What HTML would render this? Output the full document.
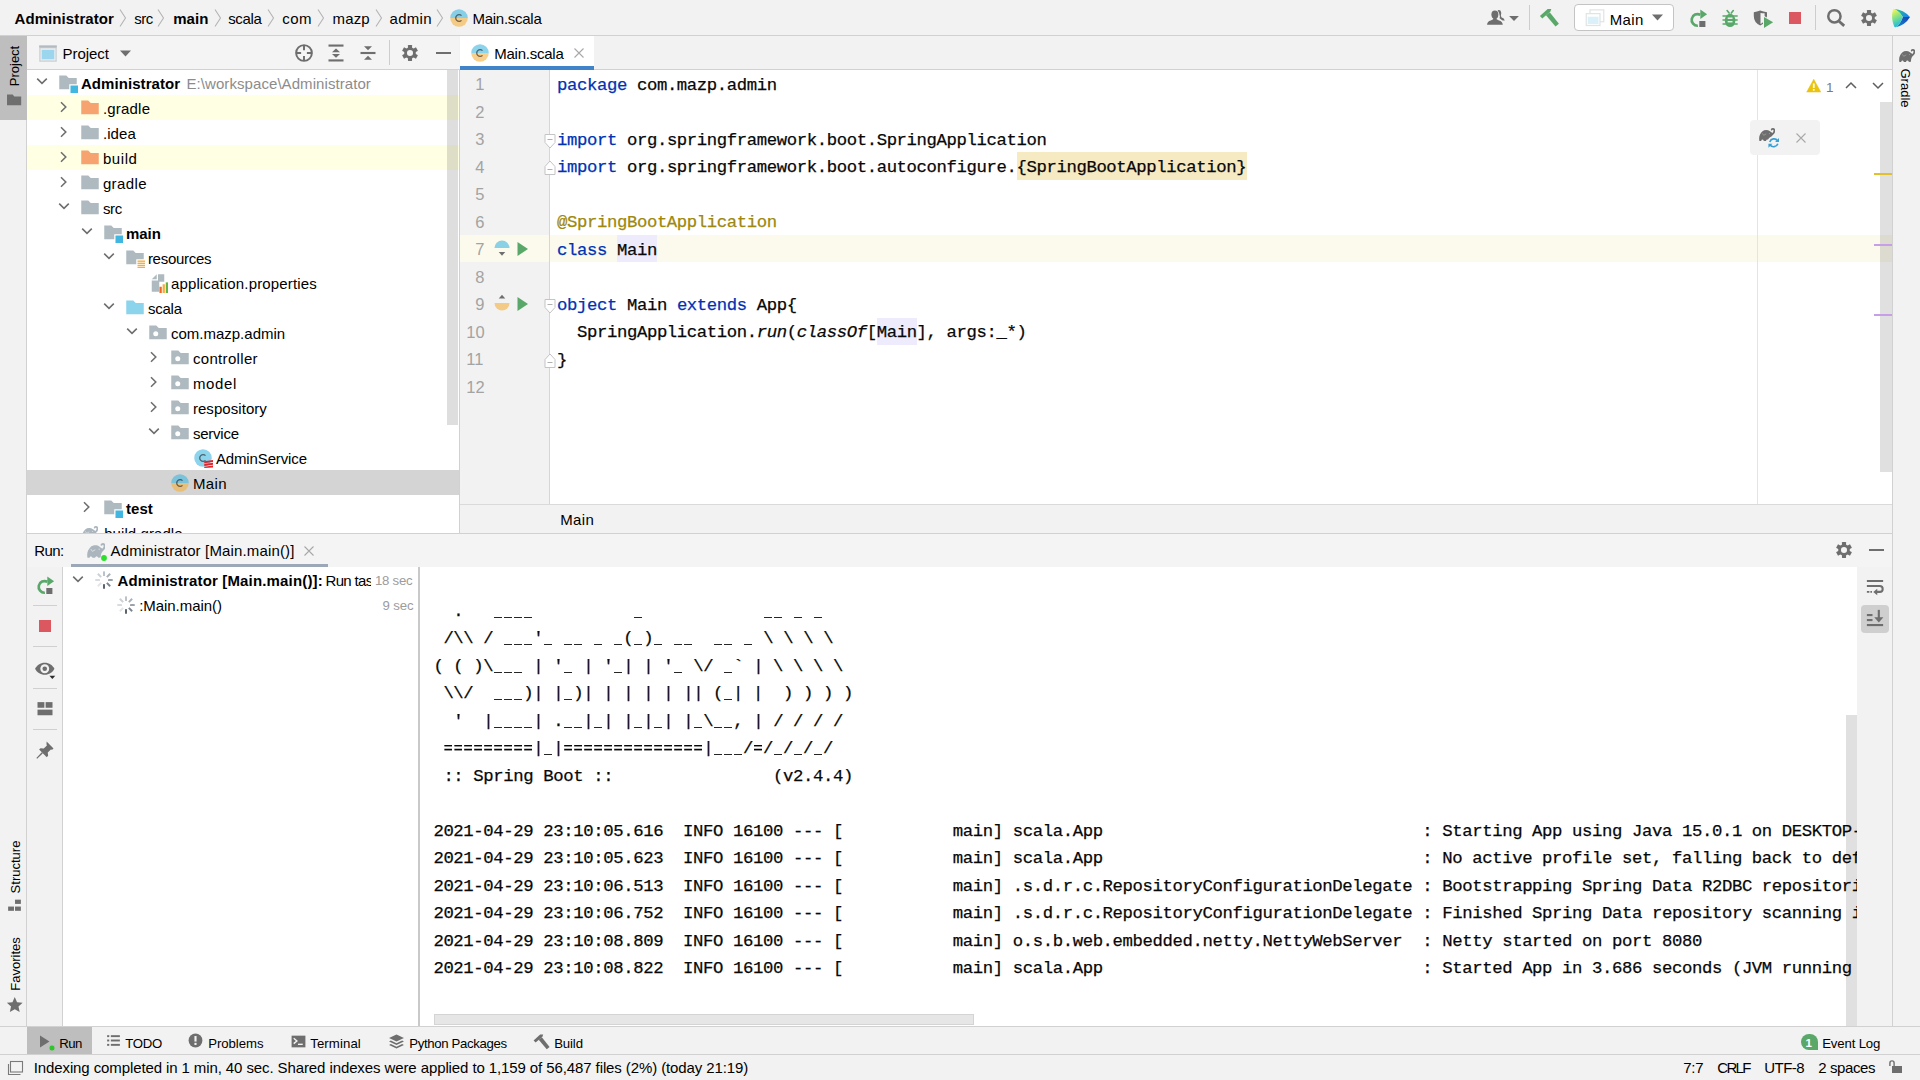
<!DOCTYPE html>
<html lang="en"><head><meta charset="utf-8"><title>Administrator - Main.scala</title>
<style>
html,body{margin:0;padding:0}
body{width:1920px;height:1080px;position:relative;overflow:hidden;background:#f2f2f2;
font-family:"Liberation Sans",sans-serif;font-size:15px;color:#000}
div,svg,span.t,pre{position:absolute}
span.t{white-space:pre;display:block}
pre{margin:0;font-family:"Liberation Mono",monospace;white-space:pre}
.kw{color:#0033b3}.an{color:#9e880d}.it{font-style:italic}
.us{-webkit-mask-image:repeating-linear-gradient(90deg,transparent 0,transparent 1.2px,#000 1.2px,#000 8.8px,transparent 8.8px,transparent 10px);mask-image:repeating-linear-gradient(90deg,transparent 0,transparent 1.2px,#000 1.2px,#000 8.8px,transparent 8.8px,transparent 10px)}
</style></head>
<body>
<div style="left:0px;top:0px;width:1920px;height:35px;background:#f2f2f2;"></div>
<div style="left:0px;top:35px;width:1920px;height:1px;background:#d1d1d1;"></div>
<span class="t" style="left:14.50px;top:8.80px;font-size:15px;line-height:20px;color:#000;font-weight:700;letter-spacing:0.089px;">Administrator</span>
<span class="t" style="left:134.20px;top:8.80px;font-size:15px;line-height:20px;color:#000;letter-spacing:-0.500px;">src</span>
<span class="t" style="left:173.20px;top:8.80px;font-size:15px;line-height:20px;color:#000;font-weight:700;letter-spacing:0.071px;">main</span>
<span class="t" style="left:228.20px;top:8.80px;font-size:15px;line-height:20px;color:#000;letter-spacing:-0.346px;">scala</span>
<span class="t" style="left:282.20px;top:8.80px;font-size:15px;line-height:20px;color:#000;letter-spacing:0.452px;">com</span>
<span class="t" style="left:332.50px;top:8.80px;font-size:15px;line-height:20px;color:#000;letter-spacing:0.178px;">mazp</span>
<span class="t" style="left:389.50px;top:8.80px;font-size:15px;line-height:20px;color:#000;letter-spacing:0.308px;">admin</span>
<span class="t" style="left:472.50px;top:8.80px;font-size:15px;line-height:20px;color:#000;letter-spacing:-0.270px;">Main.scala</span>
<svg style="left:118.1px;top:8px;" width="10" height="20" viewBox="0 0 10 20"><path d="M2 1.500L7.500 10 2 18.500" fill="none" stroke="#b4b4b4" stroke-width="1.1"/></svg>
<svg style="left:156.3px;top:8px;" width="10" height="20" viewBox="0 0 10 20"><path d="M2 1.500L7.500 10 2 18.500" fill="none" stroke="#b4b4b4" stroke-width="1.1"/></svg>
<svg style="left:212.8px;top:8px;" width="10" height="20" viewBox="0 0 10 20"><path d="M2 1.500L7.500 10 2 18.500" fill="none" stroke="#b4b4b4" stroke-width="1.1"/></svg>
<svg style="left:265.8px;top:8px;" width="10" height="20" viewBox="0 0 10 20"><path d="M2 1.500L7.500 10 2 18.500" fill="none" stroke="#b4b4b4" stroke-width="1.1"/></svg>
<svg style="left:315.8px;top:8px;" width="10" height="20" viewBox="0 0 10 20"><path d="M2 1.500L7.500 10 2 18.500" fill="none" stroke="#b4b4b4" stroke-width="1.1"/></svg>
<svg style="left:373.8px;top:8px;" width="10" height="20" viewBox="0 0 10 20"><path d="M2 1.500L7.500 10 2 18.500" fill="none" stroke="#b4b4b4" stroke-width="1.1"/></svg>
<svg style="left:434.8px;top:8px;" width="10" height="20" viewBox="0 0 10 20"><path d="M2 1.500L7.500 10 2 18.500" fill="none" stroke="#b4b4b4" stroke-width="1.1"/></svg>
<svg style="left:448.75px;top:8px;" width="20" height="20" viewBox="0 0 16 16"><path d="M1 8a7 7 0 0 1 14 0z" fill="#40b6e0" fill-opacity=".6"/><path d="M1 8a7 7 0 0 0 14 0z" fill="#f4af3d" fill-opacity=".6"/><path d="M10 9.9a2.7 2.7 0 1 1 0-3.8" fill="none" stroke="#231f20" stroke-opacity=".62" stroke-width="1.05"/></svg>
<svg style="left:1485px;top:8px;" width="22" height="20" viewBox="0 0 22 20"><g fill="#6e6e6e"><path d="M12.600 2.300Q14.300 1.300 15.600 2.800Q16.700 4.500 15.900 7.600L16.400 9.200Q19.300 10.300 19.800 12.400Q18.300 12.900 16.800 11.900L14.600 10.300L14.900 8.400Q14.600 5.200 12.600 2.300z"/><ellipse cx="9.900" cy="6.600" rx="3.500" ry="4.200"/><path d="M2 16.800Q2.300 13.300 5.800 12.500L8.200 11.300L8.200 9.500L11.600 9.500L11.600 11.300L14 12.500Q17.400 13.300 17.800 16.800z"/></g></svg>
<svg style="left:1508px;top:15px;" width="12" height="7" viewBox="0 0 12 7"><path d="M1.100 .9h9.800L6 6z" fill="#6e6e6e"/></svg>
<div style="left:1529px;top:5px;width:1px;height:25px;background:#cdcdcd;"></div>
<svg style="left:1538px;top:6px;" width="24" height="24" viewBox="0 0 24 24"><g fill="#59a869"><path d="M1.900 10L9.700 3.100L13.300 3.100L12.400 5.500L4.300 12.600z"/><path d="M8 9.200L11.700 6.200L20.900 17.700L17.500 20.400z"/></g></svg>
<div style="left:1574px;top:4px;width:100px;height:27px;background:#fff;box-sizing:border-box;border:1px solid #c4c4c4;border-radius:4px;"></div>
<svg style="left:1585px;top:8px;" width="20" height="20" viewBox="0 0 16 16"><g opacity=".3"><rect x="4" y="1.500" width="11" height="9.500" fill="#fff" stroke="#9aa7b0" stroke-width="1"/><rect x="1" y="4.500" width="11" height="9.500" fill="#fff" stroke="#9aa7b0" stroke-width="1"/><rect x="2.200" y="7" width="8.600" height="5.800" fill="#40b6e0" fill-opacity=".6"/></g></svg>
<span class="t" style="left:1609.70px;top:9.90px;font-size:15px;line-height:20px;color:#000;letter-spacing:0.371px;">Main</span>
<svg style="left:1651px;top:13px;" width="13" height="9" viewBox="0 0 13 9"><path d="M1 1.500h11L6.500 7.500z" fill="#6e6e6e"/></svg>
<svg style="left:1688px;top:6px;" width="22" height="24" viewBox="0 0 22 24"><path d="M12.300 8.760A5.850 5.850 0 1 0 9.900 19.750" fill="none" stroke="#59a869" stroke-width="2.700"/><path d="M12.300 3.400L19.100 8.200L12.300 12.900z" fill="#59a869"/><rect x="11.300" y="15" width="6.100" height="6" fill="#6e6e6e"/></svg>
<svg style="left:1720px;top:6px;" width="20" height="24" viewBox="0 0 20 24"><g fill="#59a869"><ellipse cx="10.100" cy="14.400" rx="5.300" ry="6.700"/><rect x="2.300" y="9.150" width="15.600" height="1.500" rx=".7"/><rect x="2.300" y="13.150" width="15.600" height="1.500" rx=".7"/><rect x="2.300" y="17.250" width="15.600" height="1.500" rx=".7"/></g><path d="M7.100 4.600L9.100 7.100M13.300 4.600L11.300 7.100" stroke="#59a869" stroke-width="1.600" stroke-linecap="round" fill="none"/><rect x="7.700" y="11.500" width="4.800" height="1.400" fill="#f2f2f2"/><rect x="7.700" y="15" width="4.800" height="1.400" fill="#f2f2f2"/></svg>
<svg style="left:1752px;top:6px;" width="24" height="24" viewBox="0 0 24 24"><path d="M1.800 6.200Q5 5.600 8.200 4.400Q11.400 5.600 15 6.200L15 10Q14.500 16.500 8.200 19.500Q1.800 16.500 1.800 10z" fill="#6e6e6e"/><path d="M8.500 6.900Q10.500 7.400 12.600 7.300L12.600 11L11 12L11 16.300Q10 17.300 8.500 17.900z" fill="#f2f2f2"/><path d="M11 9.300L22.700 16.300L11 23.700z" fill="#f2f2f2"/><path d="M12 10.900L21.100 16.300L12 22.100z" fill="#59a869"/></svg>
<div style="left:1789px;top:12px;width:12px;height:12px;background:#db5860;"></div>
<div style="left:1815px;top:5px;width:1px;height:25px;background:#cdcdcd;"></div>
<svg style="left:1824px;top:6px;" width="24" height="24" viewBox="0 0 24 24"><circle cx="10.400" cy="10.300" r="6.150" fill="none" stroke="#6e6e6e" stroke-width="2.500"/><path d="M15 15.300L20.200 19.900" stroke="#6e6e6e" stroke-width="2.800" fill="none"/></svg>
<svg style="left:1859px;top:8px;" width="20" height="20" viewBox="0 0 20 20"><g transform="translate(10 10)" fill="#6e6e6e"><rect x="-2.050" y="-8" width="4.100" height="4" rx=".4" transform="rotate(0)"/><rect x="-2.050" y="-8" width="4.100" height="4" rx=".4" transform="rotate(60)"/><rect x="-2.050" y="-8" width="4.100" height="4" rx=".4" transform="rotate(120)"/><rect x="-2.050" y="-8" width="4.100" height="4" rx=".4" transform="rotate(180)"/><rect x="-2.050" y="-8" width="4.100" height="4" rx=".4" transform="rotate(240)"/><rect x="-2.050" y="-8" width="4.100" height="4" rx=".4" transform="rotate(300)"/><circle r="5.800"/><circle r="3.050" fill="#f2f2f2"/></g></svg>
<svg style="left:1890px;top:6px;" width="22" height="24" viewBox="0 0 22 24"><defs><linearGradient id="lg1" x1=".2" y1="0" x2=".5" y2="1"><stop offset="0" stop-color="#fcf84a"/><stop offset=".5" stop-color="#7bdf8e"/><stop offset="1" stop-color="#10b9e6"/></linearGradient><linearGradient id="lg2" x1="0" y1="0" x2="1" y2=".6"><stop offset="0" stop-color="#21d07a"/><stop offset="1" stop-color="#1e86e8"/></linearGradient><linearGradient id="lg3" x1="1" y1="0" x2="0" y2="1"><stop offset="0" stop-color="#1a3caa"/><stop offset="1" stop-color="#1591e0"/></linearGradient></defs><path d="M4.200 2.900Q13.500 3.500 20 10.900L12.800 10.900Q9.800 5.500 4.200 2.900z" fill="url(#lg2)"/><path d="M20 10.900Q15.500 18.800 5.700 21.200Q11 17 12.800 10.900z" fill="url(#lg3)"/><path d="M4.200 2.900Q9.800 5.500 12.800 10.900Q11 17 5.700 21.200Q4.500 21.500 4 20Q.8 12 2.800 4Q3.200 2.600 4.200 2.900z" fill="url(#lg1)"/></svg>
<div style="left:0px;top:36px;width:26px;height:990px;background:#f2f2f2;"></div>
<div style="left:26px;top:36px;width:1px;height:990px;background:#d1d1d1;"></div>
<div style="left:0px;top:36px;width:27px;height:84px;background:#bebebe;"></div>
<span class="t" style="left:-13px;top:56px;width:56px;height:20px;line-height:20px;font-size:13px;text-align:center;transform:rotate(-90deg);letter-spacing:0px">Project</span>
<svg style="left:5.7px;top:91.9px;" width="16.2" height="16.2" viewBox="0 0 16 16"><path d="M1 2.500h5.600l1.600 2H15v8.500H1z" fill="#6e6e6e"/></svg>
<span class="t" style="left:-19px;top:857px;width:70px;height:20px;line-height:20px;font-size:13px;text-align:center;transform:rotate(-90deg);letter-spacing:0px">Structure</span>
<svg style="left:6px;top:897px;" width="17" height="17" viewBox="0 0 16 16"><g fill="#6e6e6e"><rect x="8.500" y="2.500" width="5.500" height="4"/><rect x="2" y="9" width="5.500" height="4"/><rect x="8.500" y="9" width="5.500" height="4"/></g></svg>
<span class="t" style="left:-19px;top:954px;width:70px;height:20px;line-height:20px;font-size:13px;text-align:center;transform:rotate(-90deg);letter-spacing:0px">Favorites</span>
<svg style="left:5.5px;top:995.5px;" width="17.5" height="17.5" viewBox="0 0 16 16"><path d="M8 1l2.100 4.700 5.100.5-3.800 3.400 1.100 5L8 12l-4.500 2.600 1.100-5L.8 6.200l5.100-.5z" fill="#6e6e6e"/></svg>
<div style="left:1892px;top:36px;width:1px;height:990px;background:#d1d1d1;"></div>
<div style="left:1893px;top:36px;width:27px;height:990px;background:#f2f2f2;"></div>
<svg style="left:1898.8px;top:48.7px;" width="16.4" height="13.2" viewBox="0 0 16.4 13.2"><path d="M0.4 12.9C-0.4 9.2 0.7 5.6 3.2 3.4C5.5 1.7 8.7 1.6 11 3.300C12 4.100 12.800 4.700 13.600 4.900L14.300 6.600C12.800 7.900 12.100 9.500 11.900 12.700L10 12.900Q8.300 10.200 6.900 12.900L4.900 12.900Q3.300 10.200 2.100 12.900z" fill="#6e6e6e"/><path d="M12.600 6.600Q15.300 5.300 15.400 2.900Q15.400 0.900 13.900 0.900Q12.900 0.900 12.700 1.600" fill="none" stroke="#6e6e6e" stroke-width="1.700" stroke-linecap="round"/><path d="M3.300 5.300L4.700 7.300L7.200 5.900" fill="none" stroke="#a6a6a6" stroke-width=".7"/><circle cx="10.600" cy="5.400" r=".5" fill="#a6a6a6"/></svg>
<span class="t" style="left:1880px;top:78px;width:50px;height:20px;line-height:20px;font-size:13px;text-align:center;transform:rotate(90deg);letter-spacing:0px">Gradle</span>
<div style="left:27px;top:36px;width:432px;height:33px;background:#f4f4f4;"></div>
<div style="left:27px;top:69px;width:432px;height:1px;background:#d1d1d1;"></div>
<div style="left:27px;top:70px;width:432px;height:463px;background:#fff;"></div>
<div style="left:459px;top:69px;width:1px;height:464px;background:#d1d1d1;"></div>
<svg style="left:37.5px;top:43px;" width="20" height="20" viewBox="0 0 16 16"><rect x="1" y="2" width="14" height="13" fill="#c9cfd3"/><rect x="1" y="2" width="14" height="1.600" fill="#b3bbc1"/><rect x="2" y="4.200" width="12" height="9.800" fill="#e9edef"/><rect x="3" y="5.500" width="10" height="7.500" fill="#9bd5ee"/></svg>
<span class="t" style="left:62.50px;top:44.10px;font-size:15px;line-height:20px;color:#000;letter-spacing:-0.041px;">Project</span>
<svg style="left:119px;top:49px;" width="13" height="9" viewBox="0 0 13 9"><path d="M1 1.500h11L6.500 7.500z" fill="#6e6e6e"/></svg>
<svg style="left:294px;top:43px;" width="20" height="20" viewBox="0 0 16 16"><g fill="none" stroke="#6e6e6e" stroke-width="1.550"><circle cx="8" cy="8" r="6.3"/><path d="M8 1.700v4M8 10.300v4M1.700 8h4M10.300 8h4"/></g></svg>
<svg style="left:326px;top:43px;" width="20" height="20" viewBox="0 0 16 16"><g fill="#6e6e6e"><rect x="2" y="1.200" width="12" height="1.700"/><rect x="2" y="13.100" width="12" height="1.700"/><path d="M8 4.300l3.200 3H4.800z"/><path d="M8 11.700l3.200-3H4.800z"/></g></svg>
<svg style="left:358px;top:43px;" width="20" height="20" viewBox="0 0 16 16"><g fill="#6e6e6e"><rect x="2" y="7.150" width="12" height="1.700"/><path d="M8 5.800l3.200-3.200H4.800z"/><path d="M8 10.200l3.200 3.200H4.800z"/></g></svg>
<div style="left:389px;top:40px;width:1px;height:25px;background:#cdcdcd;"></div>
<svg style="left:399.5px;top:43px;" width="20" height="20" viewBox="0 0 20 20"><g transform="translate(10 10)" fill="#6e6e6e"><rect x="-2.050" y="-8" width="4.100" height="4" rx=".4" transform="rotate(0)"/><rect x="-2.050" y="-8" width="4.100" height="4" rx=".4" transform="rotate(60)"/><rect x="-2.050" y="-8" width="4.100" height="4" rx=".4" transform="rotate(120)"/><rect x="-2.050" y="-8" width="4.100" height="4" rx=".4" transform="rotate(180)"/><rect x="-2.050" y="-8" width="4.100" height="4" rx=".4" transform="rotate(240)"/><rect x="-2.050" y="-8" width="4.100" height="4" rx=".4" transform="rotate(300)"/><circle r="5.800"/><circle r="3.050" fill="#f4f4f4"/></g></svg>
<div style="left:435.5px;top:51.7px;width:15px;height:2.5px;background:#6e6e6e;"></div>
<div style="left:27px;top:70px;width:432px;height:463px;overflow:hidden">
<svg style="left:30.75px;top:2.5px;" width="20" height="20" viewBox="0 0 16 16"><path d="M1 2h5.6l2 2H15v5H9v4H1z" fill="#9aa7b0" fill-opacity=".8"/><rect x="10" y="10" width="6" height="6" fill="#40b6e0"/></svg>
<span class="t" style="left:53.90px;top:3.90px;font-size:15px;line-height:20px;color:#000;font-weight:700;letter-spacing:0.074px;">Administrator</span>
<svg style="left:7px;top:3.2px;" width="16" height="16" viewBox="0 0 16 16"><path d="M3.2 5.6L8 10.4L12.8 5.6" fill="none" stroke="#6e6e6e" stroke-width="1.55"/></svg>
<div style="left:0px;top:25px;width:432px;height:25px;background:#ffffe4;"></div>
<svg style="left:52.75px;top:27.5px;" width="20" height="20" viewBox="0 0 16 16"><path d="M1 2h5.6l2 2H15v9H1z" fill="#f26522" fill-opacity=".6"/></svg>
<span class="t" style="left:75.90px;top:28.90px;font-size:15px;line-height:20px;color:#000;letter-spacing:0.204px;">.gradle</span>
<svg style="left:29px;top:28.8px;" width="16" height="16" viewBox="0 0 16 16"><path d="M5.0 3.2L9.8 8L5.0 12.8" fill="none" stroke="#6e6e6e" stroke-width="1.55"/></svg>
<svg style="left:52.75px;top:52.5px;" width="20" height="20" viewBox="0 0 16 16"><path d="M1 2h5.6l2 2H15v9H1z" fill="#9aa7b0" fill-opacity=".8"/></svg>
<span class="t" style="left:75.90px;top:53.90px;font-size:15px;line-height:20px;color:#000;letter-spacing:0.094px;">.idea</span>
<svg style="left:29px;top:53.8px;" width="16" height="16" viewBox="0 0 16 16"><path d="M5.0 3.2L9.8 8L5.0 12.8" fill="none" stroke="#6e6e6e" stroke-width="1.55"/></svg>
<div style="left:0px;top:75px;width:432px;height:25px;background:#ffffe4;"></div>
<svg style="left:52.75px;top:77.5px;" width="20" height="20" viewBox="0 0 16 16"><path d="M1 2h5.6l2 2H15v9H1z" fill="#f26522" fill-opacity=".6"/></svg>
<span class="t" style="left:75.90px;top:78.90px;font-size:15px;line-height:20px;color:#000;letter-spacing:0.579px;">build</span>
<svg style="left:29px;top:78.8px;" width="16" height="16" viewBox="0 0 16 16"><path d="M5.0 3.2L9.8 8L5.0 12.8" fill="none" stroke="#6e6e6e" stroke-width="1.55"/></svg>
<svg style="left:52.75px;top:102.5px;" width="20" height="20" viewBox="0 0 16 16"><path d="M1 2h5.6l2 2H15v9H1z" fill="#9aa7b0" fill-opacity=".8"/></svg>
<span class="t" style="left:75.90px;top:103.90px;font-size:15px;line-height:20px;color:#000;letter-spacing:0.383px;">gradle</span>
<svg style="left:29px;top:103.8px;" width="16" height="16" viewBox="0 0 16 16"><path d="M5.0 3.2L9.8 8L5.0 12.8" fill="none" stroke="#6e6e6e" stroke-width="1.55"/></svg>
<svg style="left:52.75px;top:127.5px;" width="20" height="20" viewBox="0 0 16 16"><path d="M1 2h5.6l2 2H15v9H1z" fill="#9aa7b0" fill-opacity=".8"/></svg>
<span class="t" style="left:75.90px;top:128.90px;font-size:15px;line-height:20px;color:#000;letter-spacing:-0.333px;">src</span>
<svg style="left:29px;top:128.2px;" width="16" height="16" viewBox="0 0 16 16"><path d="M3.2 5.6L8 10.4L12.8 5.6" fill="none" stroke="#6e6e6e" stroke-width="1.55"/></svg>
<svg style="left:75.75px;top:152.5px;" width="20" height="20" viewBox="0 0 16 16"><path d="M1 2h5.6l2 2H15v5H9v4H1z" fill="#9aa7b0" fill-opacity=".8"/><rect x="10" y="10" width="6" height="6" fill="#40b6e0"/></svg>
<span class="t" style="left:98.90px;top:153.90px;font-size:15px;line-height:20px;color:#000;font-weight:700;">main</span>
<svg style="left:52px;top:153.2px;" width="16" height="16" viewBox="0 0 16 16"><path d="M3.2 5.6L8 10.4L12.8 5.6" fill="none" stroke="#6e6e6e" stroke-width="1.55"/></svg>
<svg style="left:97.75px;top:177.5px;" width="20" height="20" viewBox="0 0 16 16"><path d="M1 2h5.6l2 2H15v5H9v4H1z" fill="#9aa7b0" fill-opacity=".8"/><g fill="#f4af3d"><rect x="10" y="10" width="6" height="1.1"/><rect x="10" y="11.7" width="6" height="1.1"/><rect x="10" y="13.4" width="6" height="1.1"/><rect x="10" y="15" width="6" height="1"/></g></svg>
<span class="t" style="left:120.90px;top:178.90px;font-size:15px;line-height:20px;color:#000;letter-spacing:-0.284px;">resources</span>
<svg style="left:74px;top:178.2px;" width="16" height="16" viewBox="0 0 16 16"><path d="M3.2 5.6L8 10.4L12.8 5.6" fill="none" stroke="#6e6e6e" stroke-width="1.55"/></svg>
<svg style="left:120.65px;top:202.5px;" width="20" height="20" viewBox="0 0 16 16"><path d="M8 1h5v6H9v8H3V6h5z" fill="#9aa7b0" fill-opacity=".8"/><path d="M7 1v4H3z" fill="#9aa7b0" fill-opacity=".8"/><rect x="9.2" y="11" width="1.8" height="5" fill="#f26522"/><rect x="11.7" y="9" width="1.8" height="7" fill="#f4af3d"/><rect x="14.2" y="7.5" width="1.8" height="8.5" fill="#62b543"/></svg>
<span class="t" style="left:143.90px;top:203.90px;font-size:15px;line-height:20px;color:#000;letter-spacing:0.155px;">application.properties</span>
<svg style="left:97.75px;top:227.5px;" width="20" height="20" viewBox="0 0 16 16"><path d="M1 2h5.6l2 2H15v9H1z" fill="#40b6e0" fill-opacity=".6"/></svg>
<span class="t" style="left:120.90px;top:228.90px;font-size:15px;line-height:20px;color:#000;letter-spacing:-0.206px;">scala</span>
<svg style="left:74px;top:228.2px;" width="16" height="16" viewBox="0 0 16 16"><path d="M3.2 5.6L8 10.4L12.8 5.6" fill="none" stroke="#6e6e6e" stroke-width="1.55"/></svg>
<svg style="left:120.75px;top:252.5px;" width="20" height="20" viewBox="0 0 16 16"><path d="M1 2h5.6l2 2H15v9H1z" fill="#9aa7b0" fill-opacity=".8"/><circle cx="6.200" cy="8.600" r="2" fill="#fff"/></svg>
<span class="t" style="left:143.90px;top:253.90px;font-size:15px;line-height:20px;color:#000;letter-spacing:0.006px;">com.mazp.admin</span>
<svg style="left:97px;top:253.2px;" width="16" height="16" viewBox="0 0 16 16"><path d="M3.2 5.6L8 10.4L12.8 5.6" fill="none" stroke="#6e6e6e" stroke-width="1.55"/></svg>
<svg style="left:142.75px;top:277.5px;" width="20" height="20" viewBox="0 0 16 16"><path d="M1 2h5.6l2 2H15v9H1z" fill="#9aa7b0" fill-opacity=".8"/><circle cx="6.200" cy="8.600" r="2" fill="#fff"/></svg>
<span class="t" style="left:165.90px;top:278.90px;font-size:15px;line-height:20px;color:#000;letter-spacing:0.330px;">controller</span>
<svg style="left:119px;top:278.8px;" width="16" height="16" viewBox="0 0 16 16"><path d="M5.0 3.2L9.8 8L5.0 12.8" fill="none" stroke="#6e6e6e" stroke-width="1.55"/></svg>
<svg style="left:142.75px;top:302.5px;" width="20" height="20" viewBox="0 0 16 16"><path d="M1 2h5.6l2 2H15v9H1z" fill="#9aa7b0" fill-opacity=".8"/><circle cx="6.200" cy="8.600" r="2" fill="#fff"/></svg>
<span class="t" style="left:165.90px;top:303.90px;font-size:15px;line-height:20px;color:#000;letter-spacing:0.628px;">model</span>
<svg style="left:119px;top:303.8px;" width="16" height="16" viewBox="0 0 16 16"><path d="M5.0 3.2L9.8 8L5.0 12.8" fill="none" stroke="#6e6e6e" stroke-width="1.55"/></svg>
<svg style="left:142.75px;top:327.5px;" width="20" height="20" viewBox="0 0 16 16"><path d="M1 2h5.6l2 2H15v9H1z" fill="#9aa7b0" fill-opacity=".8"/><circle cx="6.200" cy="8.600" r="2" fill="#fff"/></svg>
<span class="t" style="left:165.90px;top:328.90px;font-size:15px;line-height:20px;color:#000;letter-spacing:0.058px;">respository</span>
<svg style="left:119px;top:328.8px;" width="16" height="16" viewBox="0 0 16 16"><path d="M5.0 3.2L9.8 8L5.0 12.8" fill="none" stroke="#6e6e6e" stroke-width="1.55"/></svg>
<svg style="left:142.75px;top:352.5px;" width="20" height="20" viewBox="0 0 16 16"><path d="M1 2h5.6l2 2H15v9H1z" fill="#9aa7b0" fill-opacity=".8"/><circle cx="6.200" cy="8.600" r="2" fill="#fff"/></svg>
<span class="t" style="left:165.90px;top:353.90px;font-size:15px;line-height:20px;color:#000;letter-spacing:-0.217px;">service</span>
<svg style="left:119px;top:353.2px;" width="16" height="16" viewBox="0 0 16 16"><path d="M3.2 5.6L8 10.4L12.8 5.6" fill="none" stroke="#6e6e6e" stroke-width="1.55"/></svg>
<svg style="left:166.45px;top:377.5px;" width="20" height="20" viewBox="0 0 16 16"><circle cx="8" cy="8" r="7" fill="#40b6e0" fill-opacity=".6"/><path d="M10 9.9a2.7 2.7 0 1 1 0-3.8" fill="none" stroke="#231f20" stroke-opacity=".62" stroke-width="1.05"/><g fill="#e0262d"><path d="M9 10.6l7-1v1.6l-7 1z"/><path d="M9 12.8l7-1v1.6l-7 1z"/><path d="M9 15l7-1v1.6l-7 .4z"/></g></svg>
<span class="t" style="left:188.90px;top:378.90px;font-size:15px;line-height:20px;color:#000;letter-spacing:-0.129px;">AdminService</span>
<div style="left:0px;top:400px;width:432px;height:25px;background:#d4d4d4;"></div>
<svg style="left:143.45px;top:402.5px;" width="20" height="20" viewBox="0 0 16 16"><path d="M1 8a7 7 0 0 1 14 0z" fill="#40b6e0" fill-opacity=".6"/><path d="M1 8a7 7 0 0 0 14 0z" fill="#f4af3d" fill-opacity=".6"/><path d="M10 9.9a2.7 2.7 0 1 1 0-3.8" fill="none" stroke="#231f20" stroke-opacity=".62" stroke-width="1.05"/></svg>
<span class="t" style="left:165.90px;top:403.90px;font-size:15px;line-height:20px;color:#000;letter-spacing:0.371px;">Main</span>
<svg style="left:75.75px;top:427.5px;" width="20" height="20" viewBox="0 0 16 16"><path d="M1 2h5.6l2 2H15v5H9v4H1z" fill="#9aa7b0" fill-opacity=".8"/><rect x="10" y="10" width="6" height="6" fill="#40b6e0"/></svg>
<span class="t" style="left:98.90px;top:428.90px;font-size:15px;line-height:20px;color:#000;font-weight:700;letter-spacing:0.078px;">test</span>
<svg style="left:52px;top:428.8px;" width="16" height="16" viewBox="0 0 16 16"><path d="M5.0 3.2L9.8 8L5.0 12.8" fill="none" stroke="#6e6e6e" stroke-width="1.55"/></svg>
<svg style="left:55.05px;top:456px;" width="16.4" height="13.2" viewBox="0 0 16.4 13.2"><path d="M0.4 12.9C-0.4 9.2 0.7 5.6 3.2 3.4C5.5 1.7 8.7 1.6 11 3.300C12 4.100 12.800 4.700 13.600 4.900L14.300 6.600C12.800 7.900 12.100 9.500 11.900 12.700L10 12.900Q8.300 10.200 6.900 12.900L4.900 12.900Q3.300 10.200 2.100 12.900z" fill="#aab5bd"/><path d="M12.600 6.600Q15.300 5.300 15.400 2.900Q15.400 0.900 13.900 0.900Q12.900 0.900 12.700 1.600" fill="none" stroke="#aab5bd" stroke-width="1.700" stroke-linecap="round"/><path d="M3.300 5.300L4.700 7.300L7.200 5.900" fill="none" stroke="#e4e8ea" stroke-width=".7"/><circle cx="10.600" cy="5.400" r=".5" fill="#e4e8ea"/></svg>
<span class="t" style="left:77.20px;top:453.90px;font-size:15px;line-height:20px;color:#000;letter-spacing:0.078px;">build.gradle</span>
<span class="t" style="left:159.50px;top:3.90px;font-size:15px;line-height:20px;color:#8c8c8c;letter-spacing:0.070px;">E:\workspace\Administrator</span>
</div>
<div style="left:447px;top:70px;width:11px;height:355px;background:rgba(0,0,0,.13);"></div>
<div style="left:460px;top:36px;width:1432px;height:33px;background:#f2f2f2;"></div>
<div style="left:460px;top:69px;width:1432px;height:1px;background:#d1d1d1;"></div>
<div style="left:460px;top:36px;width:134px;height:30px;background:#fff;"></div>
<div style="left:460px;top:66px;width:134px;height:4px;background:#4083c9;"></div>
<svg style="left:469.75px;top:43px;" width="20" height="20" viewBox="0 0 16 16"><path d="M1 8a7 7 0 0 1 14 0z" fill="#40b6e0" fill-opacity=".6"/><path d="M1 8a7 7 0 0 0 14 0z" fill="#f4af3d" fill-opacity=".6"/><path d="M10 9.9a2.7 2.7 0 1 1 0-3.8" fill="none" stroke="#231f20" stroke-opacity=".62" stroke-width="1.05"/></svg>
<span class="t" style="left:494.20px;top:44.10px;font-size:15px;line-height:20px;color:#000;letter-spacing:-0.240px;">Main.scala</span>
<svg style="left:573px;top:47px;" width="12" height="12" viewBox="0 0 12 12"><path d="M1.500 1.500l9 9M10.500 1.500l-9 9" stroke="#a8a8a8" stroke-width="1.100" fill="none"/></svg>
<div style="left:460px;top:70px;width:89px;height:434px;background:#f2f2f2;"></div>
<div style="left:549px;top:70px;width:1px;height:434px;background:#d6d6d6;"></div>
<div style="left:550px;top:70px;width:1342px;height:434px;background:#fff;"></div>
<div style="left:460px;top:235px;width:89px;height:27px;background:#fcfaed;"></div>
<div style="left:550px;top:235px;width:1342px;height:27px;background:#fcfaed;"></div>
<div style="left:617px;top:235px;width:40px;height:27px;background:#edebfc;"></div>
<div style="left:877px;top:317.5px;width:40px;height:27.5px;background:#edebfc;"></div>
<div style="left:1017px;top:152px;width:230px;height:27.7px;background:#f5eac1;"></div>
<div style="left:1757px;top:70px;width:1px;height:434px;background:#e4e4e4;"></div>
<div style="left:460px;top:504px;width:1432px;height:1px;background:#dadada;"></div>
<div style="left:460px;top:505px;width:1432px;height:28px;background:#f2f2f2;"></div>
<span class="t" style="left:560.20px;top:509.90px;font-size:15px;line-height:20px;color:#000;letter-spacing:0.371px;">Main</span>
<span class="t" style="left:475.30px;top:74.20px;font-size:16.5px;line-height:20px;color:#a3a3a3;font-family:"Liberation Mono", monospace;">1</span>
<span class="t" style="left:475.30px;top:101.70px;font-size:16.5px;line-height:20px;color:#a3a3a3;font-family:"Liberation Mono", monospace;">2</span>
<span class="t" style="left:475.30px;top:129.20px;font-size:16.5px;line-height:20px;color:#a3a3a3;font-family:"Liberation Mono", monospace;">3</span>
<span class="t" style="left:475.30px;top:156.70px;font-size:16.5px;line-height:20px;color:#a3a3a3;font-family:"Liberation Mono", monospace;">4</span>
<span class="t" style="left:475.30px;top:184.20px;font-size:16.5px;line-height:20px;color:#a3a3a3;font-family:"Liberation Mono", monospace;">5</span>
<span class="t" style="left:475.30px;top:211.70px;font-size:16.5px;line-height:20px;color:#a3a3a3;font-family:"Liberation Mono", monospace;">6</span>
<span class="t" style="left:475.30px;top:239.20px;font-size:16.5px;line-height:20px;color:#a3a3a3;font-family:"Liberation Mono", monospace;">7</span>
<span class="t" style="left:475.30px;top:266.70px;font-size:16.5px;line-height:20px;color:#a3a3a3;font-family:"Liberation Mono", monospace;">8</span>
<span class="t" style="left:475.30px;top:294.20px;font-size:16.5px;line-height:20px;color:#a3a3a3;font-family:"Liberation Mono", monospace;">9</span>
<span class="t" style="left:466.30px;top:321.70px;font-size:16.5px;line-height:20px;color:#a3a3a3;font-family:"Liberation Mono", monospace;letter-spacing:-0.606px;">10</span>
<span class="t" style="left:466.30px;top:349.20px;font-size:16.5px;line-height:20px;color:#a3a3a3;font-family:"Liberation Mono", monospace;letter-spacing:-0.606px;">11</span>
<span class="t" style="left:466.30px;top:376.70px;font-size:16.5px;line-height:20px;color:#a3a3a3;font-family:"Liberation Mono", monospace;letter-spacing:-0.606px;">12</span>
<pre style="left:557px;top:71.7px;font-size:17.3px;letter-spacing:-0.382px;line-height:27.5px;color:#080808;-webkit-text-stroke:.25px"><span class="kw">package</span> com.mazp.admin

<span class="kw">import</span> org.springframework.boot.SpringApplication
<span class="kw">import</span> org.springframework.boot.autoconfigure.{SpringBootApplication}

<span class="an">@SpringBootApplication</span>
<span class="kw">class</span> Main

<span class="kw">object</span> Main <span class="kw">extends</span> App{
  SpringApplication.<span class="it">run</span>(<span class="it">classOf</span>[Main], args:_*)
}
</pre>
<svg style="left:491.7px;top:237.5px;" width="20" height="20" viewBox="0 0 16 16"><path d="M2 8a6 6 0 0 1 12 0z" fill="#40b6e0" fill-opacity=".6"/><path d="M5.400 11.200h5.200L8 14.200z" fill="#6e6e6e"/></svg>
<svg style="left:512.4px;top:238.7px;" width="20" height="20" viewBox="0 0 16 16"><path d="M4.400 2.400L12.800 8 4.400 13.600z" fill="#59a869"/></svg>
<svg style="left:491.7px;top:292.5px;" width="20" height="20" viewBox="0 0 16 16"><path d="M2 8a6 6 0 0 0 12 0z" fill="#f4af3d" fill-opacity=".6"/><path d="M5.400 4.300h5.200L8 1.300z" fill="#6e6e6e"/></svg>
<svg style="left:512.4px;top:293.7px;" width="20" height="20" viewBox="0 0 16 16"><path d="M4.400 2.400L12.800 8 4.400 13.600z" fill="#59a869"/></svg>
<svg style="left:543.6px;top:134px;" width="12" height="15" viewBox="0 0 12 15"><path d="M1 .500h10v8L6 14 1 8.500z" fill="#fff" stroke="#c4c4c4"/><path d="M3.500 5.500h5" stroke="#b0b0b0"/></svg>
<svg style="left:543.6px;top:159.5px;" width="12" height="15" viewBox="0 0 12 15"><path d="M1 14.500h10v-8L6 1 1 6.500z" fill="#fff" stroke="#c4c4c4"/><path d="M3.500 9.500h5" stroke="#b0b0b0"/></svg>
<svg style="left:543.6px;top:299px;" width="12" height="15" viewBox="0 0 12 15"><path d="M1 .500h10v8L6 14 1 8.500z" fill="#fff" stroke="#c4c4c4"/><path d="M3.500 5.500h5" stroke="#b0b0b0"/></svg>
<svg style="left:543.6px;top:352.5px;" width="12" height="15" viewBox="0 0 12 15"><path d="M1 14.500h10v-8L6 1 1 6.500z" fill="#fff" stroke="#c4c4c4"/><path d="M3.500 9.500h5" stroke="#b0b0b0"/></svg>
<svg style="left:1806px;top:78px;" width="15.5" height="15.5" viewBox="0 0 16 16"><path d="M8 1.300L15.300 14.500H.700z" fill="#eac30c" stroke="#eac30c" stroke-width=".5" stroke-linejoin="round"/><rect x="7.100" y="5.600" width="1.800" height="4.700" fill="#fff"/><rect x="7.100" y="11.300" width="1.800" height="1.800" fill="#fff"/></svg>
<span class="t" style="left:1826.00px;top:77.72px;font-size:13.5px;line-height:20px;color:#7a7a7a;">1</span>
<svg style="left:1844px;top:79px;" width="14" height="12" viewBox="0 0 14 12"><path d="M2 9l5-5 5 5" fill="none" stroke="#5e5e5e" stroke-width="1.500"/></svg>
<svg style="left:1871px;top:80px;" width="14" height="12" viewBox="0 0 14 12"><path d="M2 3l5 5 5-5" fill="none" stroke="#5e5e5e" stroke-width="1.500"/></svg>
<div style="left:1750px;top:120px;width:70px;height:35px;background:#f2f2f2;border-radius:4px;"></div>
<svg style="left:1758.5px;top:128px;" width="16.4" height="13.2" viewBox="0 0 16.4 13.2"><path d="M0.4 12.9C-0.4 9.2 0.7 5.6 3.2 3.4C5.5 1.7 8.7 1.6 11 3.300C12 4.100 12.800 4.700 13.600 4.900L14.300 6.600C12.800 7.900 12.100 9.500 11.900 12.700L10 12.900Q8.300 10.200 6.900 12.900L4.900 12.900Q3.300 10.200 2.100 12.900z" fill="#6e6e6e"/><path d="M12.600 6.600Q15.300 5.300 15.400 2.900Q15.400 0.900 13.900 0.900Q12.900 0.900 12.700 1.600" fill="none" stroke="#6e6e6e" stroke-width="1.700" stroke-linecap="round"/><path d="M3.300 5.300L4.700 7.300L7.200 5.900" fill="none" stroke="#a6a6a6" stroke-width=".7"/><circle cx="10.600" cy="5.400" r=".5" fill="#a6a6a6"/></svg>
<div style="left:1766.5px;top:135.5px;width:14px;height:14px;background:#f2f2f2;border-radius:7px;"></div>
<svg style="left:1767.6px;top:136.8px;" width="11.6" height="11.6" viewBox="0 0 13 13"><g fill="none" stroke="#389fd6" stroke-width="1.900"><path d="M10.800 4.200A5 5 0 0 0 2 5.500"/><path d="M2.200 8.800A5 5 0 0 0 11 7.500"/></g><path d="M12.500 1v4.500H8z" fill="#389fd6"/><path d="M.500 12V7.500H5z" fill="#389fd6"/></svg>
<svg style="left:1795px;top:132px;" width="12" height="12" viewBox="0 0 12 12"><path d="M1.500 1.500l9 9M10.500 1.500l-9 9" stroke="#a8a8a8" stroke-width="1.100" fill="none"/></svg>
<div style="left:1880px;top:102px;width:12px;height:370px;background:rgba(0,0,0,.12);"></div>
<div style="left:1874px;top:173px;width:18px;height:2px;background:#e2bf2d;"></div>
<div style="left:1874px;top:244px;width:18px;height:2px;background:#c79fe8;"></div>
<div style="left:1874px;top:314px;width:18px;height:2px;background:#c79fe8;"></div>
<div style="left:27px;top:533px;width:1865px;height:1px;background:#d1d1d1;"></div>
<div style="left:27px;top:534px;width:1865px;height:33px;background:#f4f4f4;"></div>
<span class="t" style="left:34.20px;top:541.10px;font-size:15px;line-height:20px;color:#000;letter-spacing:-0.597px;">Run:</span>
<svg style="left:86.6px;top:543px;" width="18.8" height="15.1" viewBox="0 0 16.4 13.2"><path d="M0.4 12.9C-0.4 9.2 0.7 5.6 3.2 3.4C5.5 1.7 8.7 1.6 11 3.300C12 4.100 12.800 4.700 13.600 4.900L14.300 6.600C12.800 7.900 12.100 9.500 11.900 12.700L10 12.900Q8.300 10.200 6.900 12.900L4.900 12.900Q3.300 10.200 2.100 12.900z" fill="#aab5bd"/><path d="M12.600 6.600Q15.300 5.300 15.400 2.900Q15.400 0.900 13.900 0.900Q12.900 0.900 12.700 1.600" fill="none" stroke="#aab5bd" stroke-width="1.700" stroke-linecap="round"/><path d="M3.300 5.300L4.700 7.300L7.200 5.900" fill="none" stroke="#e4e8ea" stroke-width=".7"/><circle cx="10.600" cy="5.400" r=".5" fill="#e4e8ea"/></svg>
<svg style="left:99.9px;top:553.7px;" width="8" height="8" viewBox="0 0 8 8"><circle cx="4" cy="4" r="2.900" fill="#2be02b"/></svg>
<span class="t" style="left:110.50px;top:541.10px;font-size:15px;line-height:20px;color:#000;letter-spacing:0.146px;">Administrator [Main.main()]</span>
<svg style="left:303px;top:545px;" width="12" height="12" viewBox="0 0 12 12"><path d="M1.500 1.500l9 9M10.500 1.500l-9 9" stroke="#a8a8a8" stroke-width="1.100" fill="none"/></svg>
<div style="left:71px;top:563.5px;width:256.5px;height:3.5px;background:#9ca7b8;"></div>
<svg style="left:1834px;top:540px;" width="20" height="20" viewBox="0 0 20 20"><g transform="translate(10 10)" fill="#6e6e6e"><rect x="-2.050" y="-8" width="4.100" height="4" rx=".4" transform="rotate(0)"/><rect x="-2.050" y="-8" width="4.100" height="4" rx=".4" transform="rotate(60)"/><rect x="-2.050" y="-8" width="4.100" height="4" rx=".4" transform="rotate(120)"/><rect x="-2.050" y="-8" width="4.100" height="4" rx=".4" transform="rotate(180)"/><rect x="-2.050" y="-8" width="4.100" height="4" rx=".4" transform="rotate(240)"/><rect x="-2.050" y="-8" width="4.100" height="4" rx=".4" transform="rotate(300)"/><circle r="5.800"/><circle r="3.050" fill="#f4f4f4"/></g></svg>
<div style="left:1868.5px;top:548.8px;width:15px;height:2.5px;background:#6e6e6e;"></div>
<div style="left:27px;top:567px;width:35px;height:459px;background:#f2f2f2;"></div>
<div style="left:62px;top:567px;width:1px;height:459px;background:#d1d1d1;"></div>
<svg style="left:35.4px;top:573.2px;" width="22" height="24" viewBox="0 0 22 24"><path d="M12.300 8.760A5.850 5.850 0 1 0 9.900 19.750" fill="none" stroke="#59a869" stroke-width="2.700"/><path d="M12.300 3.400L19.100 8.200L12.300 12.900z" fill="#59a869"/><rect x="11.300" y="15" width="6.100" height="6" fill="#6e6e6e"/></svg>
<div style="left:33px;top:605px;width:24px;height:1px;background:#d0d0d0;"></div>
<div style="left:39px;top:620px;width:12px;height:12px;background:#db5860;"></div>
<div style="left:33px;top:646px;width:24px;height:1px;background:#d0d0d0;"></div>
<svg style="left:34.3px;top:657.5px;" width="21.5" height="21.5" viewBox="0 0 16 16"><path d="M8 3.500c3.300 0 5.900 1.900 7.200 4.500C13.900 10.600 11.300 12.500 8 12.500S2.100 10.600.800 8C2.100 5.400 4.700 3.500 8 3.500z" fill="#6e6e6e"/><circle cx="8" cy="8" r="3.300" fill="#f2f2f2"/><circle cx="8" cy="8" r="1.700" fill="#6e6e6e"/><path d="M11.500 13.300h4.300l-2.150 2.300z" fill="#2b2b2b"/></svg>
<div style="left:33px;top:688px;width:24px;height:1px;background:#d0d0d0;"></div>
<svg style="left:35px;top:699px;" width="20" height="20" viewBox="0 0 16 16"><g fill="#6e6e6e"><rect x="2" y="2.500" width="5.500" height="4.500"/><rect x="8.500" y="2.500" width="5.500" height="4.500"/><rect x="2" y="8.500" width="12" height="4.500"/></g></svg>
<div style="left:33px;top:729px;width:24px;height:1px;background:#d0d0d0;"></div>
<svg style="left:35px;top:739.5px;" width="20" height="20" viewBox="0 0 16 16"><g fill="#6e6e6e"><path d="M9.300 1.200l5.500 5.500-1.100 1.100-1-.3-2.500 2.500.3 2.600-1.100 1.100L3.300 7.600l1.100-1.100 2.600.3 2.500-2.500-.3-1z"/><path d="M5.400 9.700l.9.900-4.600 4.300-.6-.6z"/></g></svg>
<div style="left:63px;top:567px;width:355px;height:459px;background:#fff;"></div>
<div style="left:418px;top:567px;width:2px;height:459px;background:#c9c9c9;"></div>
<svg style="left:70px;top:571.2px;" width="16" height="16" viewBox="0 0 16 16"><path d="M3.2 5.6L8 10.4L12.8 5.6" fill="none" stroke="#6e6e6e" stroke-width="1.55"/></svg>
<svg style="left:94px;top:570px;" width="20" height="20" viewBox="-8 -8 16 16"><rect x="-.8" y="-7" width="1.600" height="3.800" rx=".3" fill="#bcc3c8" transform="rotate(0)"/><rect x="-.8" y="-7" width="1.600" height="3.800" rx=".3" fill="#aab2b8" transform="rotate(45)"/><rect x="-.8" y="-7" width="1.600" height="3.800" rx=".3" fill="#9aa3aa" transform="rotate(90)"/><rect x="-.8" y="-7" width="1.600" height="3.800" rx=".3" fill="#7b858d" transform="rotate(135)"/><rect x="-.8" y="-7" width="1.600" height="3.800" rx=".3" fill="#5a6570" transform="rotate(180)"/><rect x="-.8" y="-7" width="1.600" height="3.800" rx=".3" fill="#e2e5e7" transform="rotate(225)"/><rect x="-.8" y="-7" width="1.600" height="3.800" rx=".3" fill="#d8dcdf" transform="rotate(270)"/><rect x="-.8" y="-7" width="1.600" height="3.800" rx=".3" fill="#ccd1d5" transform="rotate(315)"/></svg>
<span class="t" style="left:117.50px;top:570.80px;font-size:15px;line-height:20px;color:#000;font-weight:700;letter-spacing:0.163px;">Administrator [Main.main()]:</span>
<span class="t" style="left:325.50px;top:570.80px;font-size:15px;line-height:20px;color:#000;letter-spacing:-0.667px;width:45.5px;overflow:hidden;">Run tasks</span>
<span class="t" style="left:374.90px;top:570.93px;font-size:13.2px;line-height:20px;color:#9c9c9c;letter-spacing:-0.210px;">18 sec</span>
<svg style="left:116px;top:594.8px;" width="20" height="20" viewBox="-8 -8 16 16"><rect x="-.8" y="-7" width="1.600" height="3.800" rx=".3" fill="#bcc3c8" transform="rotate(0)"/><rect x="-.8" y="-7" width="1.600" height="3.800" rx=".3" fill="#aab2b8" transform="rotate(45)"/><rect x="-.8" y="-7" width="1.600" height="3.800" rx=".3" fill="#9aa3aa" transform="rotate(90)"/><rect x="-.8" y="-7" width="1.600" height="3.800" rx=".3" fill="#7b858d" transform="rotate(135)"/><rect x="-.8" y="-7" width="1.600" height="3.800" rx=".3" fill="#5a6570" transform="rotate(180)"/><rect x="-.8" y="-7" width="1.600" height="3.800" rx=".3" fill="#e2e5e7" transform="rotate(225)"/><rect x="-.8" y="-7" width="1.600" height="3.800" rx=".3" fill="#d8dcdf" transform="rotate(270)"/><rect x="-.8" y="-7" width="1.600" height="3.800" rx=".3" fill="#ccd1d5" transform="rotate(315)"/></svg>
<span class="t" style="left:139.20px;top:595.90px;font-size:15px;line-height:20px;color:#000;letter-spacing:-0.055px;">:Main.main()</span>
<span class="t" style="left:382.50px;top:595.83px;font-size:13.2px;line-height:20px;color:#9c9c9c;letter-spacing:-0.106px;">9 sec</span>
<div style="left:420px;top:567px;width:1437px;height:459px;background:#fff;"></div>
<div style="left:420px;top:567px;width:1437px;height:459px;overflow:hidden"><pre style="left:13.4px;top:3.0px;font-size:17.3px;letter-spacing:-0.382px;line-height:27.5px;color:#080808;-webkit-text-stroke:.25px #080808">

  .   <span class="us">____</span>          <span class="us">_</span>            <span class="us">__</span> <span class="us">_</span> <span class="us">_</span>
 /\\ / <span class="us">___</span>'<span class="us">_</span> <span class="us">__</span> <span class="us">_</span> <span class="us">_</span>(<span class="us">_</span>)<span class="us">_</span> <span class="us">__</span>  <span class="us">__</span> <span class="us">_</span> \ \ \ \
( ( )\<span class="us">___</span> | '<span class="us">_</span> | '<span class="us">_</span>| | '<span class="us">_</span> \/ <span class="us">_</span>` | \ \ \ \
 \\/  <span class="us">___</span>)| |<span class="us">_</span>)| | | | | || (<span class="us">_</span>| |  ) ) ) )
  '  |<span class="us">____</span>| .<span class="us">__</span>|<span class="us">_</span>| |<span class="us">_</span>|<span class="us">_</span>| |<span class="us">_</span>\<span class="us">__</span>, | / / / /
 <span class="us">=========</span>|<span class="us">_</span>|<span class="us">==============</span>|<span class="us">___</span>/<span class="us">=</span>/<span class="us">_</span>/<span class="us">_</span>/<span class="us">_</span>/
 :: Spring Boot ::                (v2.4.4)

2021-04-29 23:10:05.616  INFO 16100 --- [           main] scala.App                                : Starting App using Java 15.0.1 on DESKTOP-7Q3K2MV with PID 16100
2021-04-29 23:10:05.623  INFO 16100 --- [           main] scala.App                                : No active profile set, falling back to default profiles: default
2021-04-29 23:10:06.513  INFO 16100 --- [           main] .s.d.r.c.RepositoryConfigurationDelegate : Bootstrapping Spring Data R2DBC repositories in DEFAULT mode.
2021-04-29 23:10:06.752  INFO 16100 --- [           main] .s.d.r.c.RepositoryConfigurationDelegate : Finished Spring Data repository scanning in 231 ms. Found 1 R2DBC repository interfaces.
2021-04-29 23:10:08.809  INFO 16100 --- [           main] o.s.b.web.embedded.netty.NettyWebServer  : Netty started on port 8080
2021-04-29 23:10:08.822  INFO 16100 --- [           main] scala.App                                : Started App in 3.686 seconds (JVM running for 4.213)</pre></div>
<div style="left:1846px;top:715px;width:11px;height:311px;background:rgba(0,0,0,.12);"></div>
<div style="left:434px;top:1014px;width:540px;height:11px;background:#e6e6e6;box-sizing:border-box;border:1px solid #d4d4d4;"></div>
<div style="left:1858px;top:567px;width:34px;height:459px;background:#f2f2f2;"></div>
<svg style="left:1865px;top:576.5px;" width="20" height="20" viewBox="0 0 16 16"><g fill="none" stroke="#6e6e6e" stroke-width="1.650"><path d="M1.500 3.200h13M1.500 7.200h10.300a2.300 2.300 0 0 1 0 4.700H8.500"/></g><path d="M9.800 9.300v5.200L6.600 11.900z" fill="#6e6e6e"/><g fill="#6e6e6e"><rect x="1.500" y="11.200" width="2" height="1.400"/><rect x="4.300" y="11.200" width="1.300" height="1.400"/></g></svg>
<div style="left:1861px;top:605px;width:28px;height:27.5px;background:#cfcfcf;border-radius:4px;"></div>
<svg style="left:1865px;top:607.5px;" width="20" height="20" viewBox="0 0 16 16"><g fill="#6e6e6e"><rect x="1.500" y="12.800" width="13" height="1.700"/><rect x="1.500" y="4.800" width="4.500" height="1.700"/><rect x="1.500" y="8.800" width="4.500" height="1.700"/><rect x="10.200" y="1.500" width="1.700" height="7"/><path d="M7.400 7.300h7.300L11.050 11.500z"/></g></svg>
<div style="left:0px;top:1026px;width:1920px;height:1px;background:#d1d1d1;"></div>
<div style="left:0px;top:1027px;width:1920px;height:27px;background:#f2f2f2;"></div>
<div style="left:26.5px;top:1027px;width:65.5px;height:27px;background:#bebebe;"></div>
<svg style="left:38px;top:1034px;" width="14" height="15" viewBox="0 0 14 15"><path d="M2 1.500L11.500 7.500 2 13.500z" fill="#6e6e6e"/></svg>
<svg style="left:48px;top:1044px;" width="8" height="8" viewBox="0 0 8 8"><circle cx="4" cy="4" r="3" fill="#30c52b" stroke="#bebebe" stroke-width=".8"/></svg>
<span class="t" style="left:59.20px;top:1034.13px;font-size:13.2px;line-height:20px;color:#000;letter-spacing:-0.501px;">Run</span>
<svg style="left:105px;top:1032px;" width="17" height="17" viewBox="0 0 16 16"><g fill="#6e6e6e"><rect x="2" y="3" width="2" height="1.800"/><rect x="5.500" y="3" width="8.500" height="1.800"/><rect x="2" y="7.100" width="2" height="1.800"/><rect x="5.500" y="7.100" width="8.500" height="1.800"/><rect x="2" y="11.200" width="2" height="1.800"/><rect x="5.500" y="11.200" width="8.500" height="1.800"/></g></svg>
<span class="t" style="left:125.20px;top:1034.13px;font-size:13.2px;line-height:20px;color:#000;letter-spacing:-0.290px;">TODO</span>
<svg style="left:187px;top:1032px;" width="17" height="17" viewBox="0 0 16 16"><circle cx="8" cy="8" r="6.500" fill="#6e6e6e"/><rect x="7" y="3.800" width="2" height="5.200" fill="#f2f2f2"/><rect x="7" y="10.200" width="2" height="2" fill="#f2f2f2"/></svg>
<span class="t" style="left:208.20px;top:1034.13px;font-size:13.2px;line-height:20px;color:#000;letter-spacing:-0.050px;">Problems</span>
<svg style="left:289.5px;top:1033px;" width="17" height="17" viewBox="0 0 16 16"><rect x="1.500" y="2.500" width="13" height="11" fill="#6e6e6e"/><path d="M3.500 5l3 2.500-3 2.500" fill="none" stroke="#f2f2f2" stroke-width="1.300"/><rect x="7.500" y="10" width="4.500" height="1.300" fill="#f2f2f2"/></svg>
<span class="t" style="left:310.20px;top:1034.13px;font-size:13.2px;line-height:20px;color:#000;letter-spacing:0.107px;">Terminal</span>
<svg style="left:388px;top:1033px;" width="17" height="17" viewBox="0 0 16 16"><g fill="#6e6e6e"><path d="M8 1.300l7 3.400-7 3.400-7-3.400z"/><path d="M2.700 7.100L8 9.700l5.300-2.600 1.700.9-7 3.400-7-3.400z"/><path d="M2.700 10.400L8 13l5.300-2.600 1.700.9-7 3.400-7-3.400z"/></g></svg>
<span class="t" style="left:409.20px;top:1034.13px;font-size:13.2px;line-height:20px;color:#000;letter-spacing:-0.329px;">Python Packages</span>
<svg style="left:532.4px;top:1031.7px;" width="20.2" height="20.2" viewBox="0 0 24 24"><g fill="#6e6e6e"><path d="M1.900 10L9.700 3.100L13.300 3.100L12.400 5.500L4.300 12.600z"/><path d="M8 9.200L11.700 6.200L20.900 17.700L17.500 20.400z"/></g></svg>
<span class="t" style="left:554.20px;top:1034.13px;font-size:13.2px;line-height:20px;color:#000;letter-spacing:-0.126px;">Build</span>
<div style="left:1801px;top:1034px;width:17px;height:16px;background:#59a869;border-radius:8.5px 8.5px 0 8.5px;"></div>
<span class="t" style="left:1805.40px;top:1033.02px;font-size:11.5px;line-height:20px;color:#fff;font-weight:700;">1</span>
<span class="t" style="left:1822.20px;top:1034.13px;font-size:13.2px;line-height:20px;color:#000;letter-spacing:-0.155px;">Event Log</span>
<div style="left:0px;top:1054px;width:1920px;height:1px;background:#d1d1d1;"></div>
<div style="left:0px;top:1055px;width:1920px;height:25px;background:#f2f2f2;"></div>
<svg style="left:7px;top:1060px;" width="17" height="16" viewBox="0 0 17 16"><g fill="none" stroke="#7a7a7a" stroke-width="1.100"><rect x="3.500" y="1.500" width="12" height="10.500"/><path d="M1.500 4v10.500h12"/></g></svg>
<span class="t" style="left:33.70px;top:1058.00px;font-size:15px;line-height:20px;color:#000;letter-spacing:-0.101px;">Indexing completed in 1 min, 40 sec. Shared indexes were applied to 1,159 of 56,487 files (2%) (today 21:19)</span>
<span class="t" style="left:1683.20px;top:1058.00px;font-size:15px;line-height:20px;color:#000;letter-spacing:-0.186px;">7:7</span>
<span class="t" style="left:1717.20px;top:1058.00px;font-size:15px;line-height:20px;color:#000;letter-spacing:-1.618px;">CRLF</span>
<span class="t" style="left:1764.20px;top:1058.00px;font-size:15px;line-height:20px;color:#000;letter-spacing:-0.500px;">UTF-8</span>
<span class="t" style="left:1818.20px;top:1058.00px;font-size:15px;line-height:20px;color:#000;letter-spacing:-0.381px;">2 spaces</span>
<svg style="left:1887px;top:1058.2px;" width="16" height="16" viewBox="0 0 16 16"><g fill="#6e6e6e"><rect x="5" y="8" width="10" height="7"/><path d="M2.200 8V5a2.800 2.800 0 0 1 5.600 0v3H6.400V5a1.400 1.400 0 0 0-2.800 0v3z"/></g></svg>
</body></html>
